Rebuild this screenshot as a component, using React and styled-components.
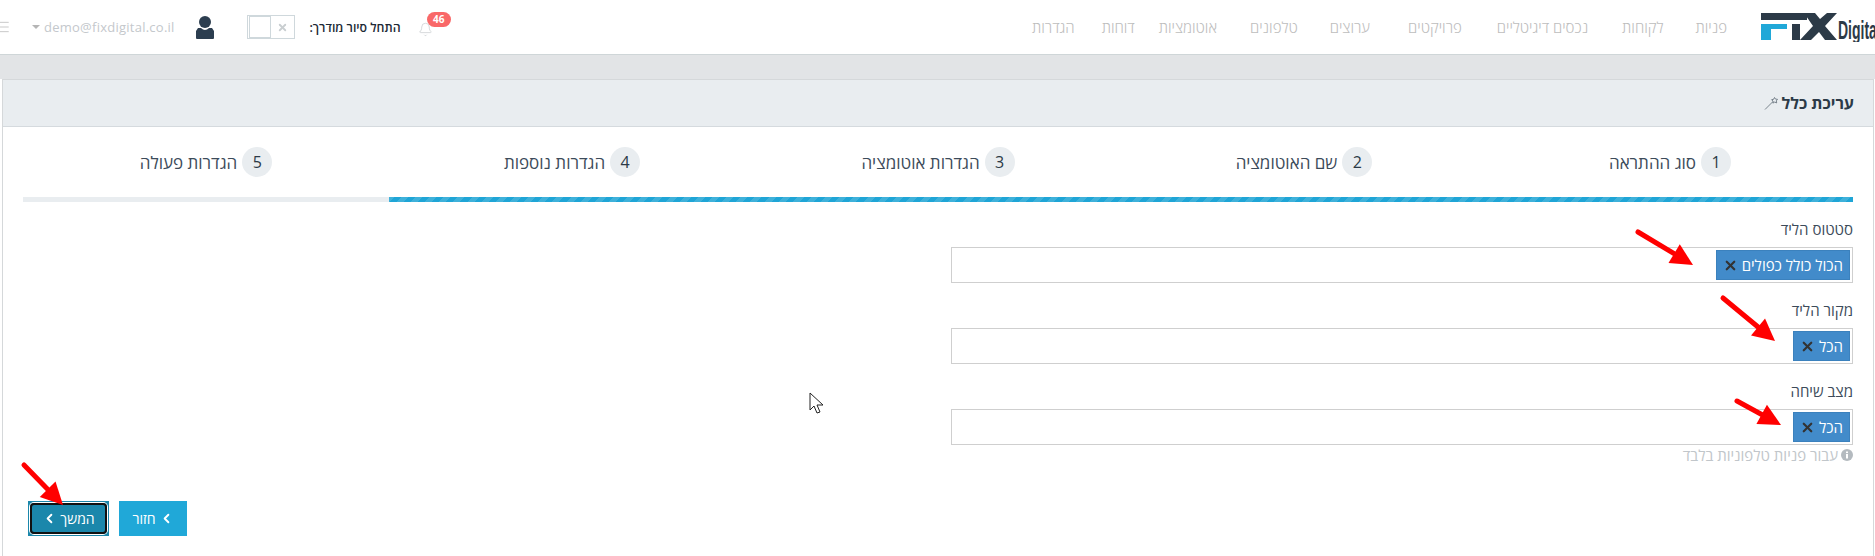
import React from "react";
import styled, { createGlobalStyle } from "styled-components";
import { ChevronLeft, Bell, Menu, X } from "lucide-react";

const GlobalStyle = createGlobalStyle`
  html, body {
    margin: 0;
    padding: 0;
    background: #fff;
    overflow: hidden;
  }
  body {
    font-family: "Open Sans", "Liberation Sans", "DejaVu Sans", sans-serif;
    color: #3c4b5a;
  }
`;

const Page = styled.div`
  position: relative;
  width: 1875px;
  height: 556px;
  overflow: hidden;
  background: #fff;
`;

// Top bar
const Header = styled.header`
  height: 55px;
  box-sizing: border-box;
  display: flex;
  align-items: center;
  justify-content: space-between;
  background: #fff;
  border-bottom: 1px solid #cfd6d8;
`;

const HeaderRight = styled.div`
  display: flex;
  align-items: center;
`;

const LogoBox = styled.div`
  width: 114px;
  height: 30px;
  overflow: hidden;
  display: flex;
  align-items: center;
  direction: ltr;
`;

const LogoMark = styled.svg`
  flex-shrink: 0;
  display: block;
`;

const LogoWord = styled.span`
  flex-shrink: 0;
  font-family: "Liberation Sans", sans-serif;
  font-weight: 700;
  font-size: 25px;
  line-height: 24px;
  color: #2c3a47;
  transform: scaleX(0.56);
  transform-origin: left center;
  margin-left: 1px;
  margin-top: 6px;
`;

const Nav = styled.nav`
  display: flex;
  align-items: center;
  margin-right: 34px;
`;

const NavItem = styled.a`
  font-size: 15px;
  font-weight: 300;
  color: #bdbdbd;
  margin-left: ${(p) => p.$gap}px;
  white-space: nowrap;
`;

const HeaderLeft = styled.div`
  display: flex;
  align-items: center;
  direction: ltr;
`;

const Burger = styled.div`
  display: flex;
  margin-left: -5px;
  color: #c9c9c9;
`;

const Caret = styled.span`
  width: 0;
  height: 0;
  margin-left: 21px;
  border-left: 4px solid transparent;
  border-right: 4px solid transparent;
  border-top: 4px solid #b5b5b5;
`;

const Email = styled.span`
  margin-left: 4px;
  font-size: 13px;
  letter-spacing: 0.25px;
  color: #c4c8cc;
`;

const UserIcon = styled.svg`
  margin-left: 20px;
  display: block;
`;

const Toggle = styled.div`
  margin-left: 32px;
  width: 48px;
  height: 24px;
  box-sizing: border-box;
  border: 1px solid #cfd8dc;
  display: flex;
  align-items: center;
  padding: 1px;
`;

const ToggleKnob = styled.div`
  width: 20px;
  height: 20px;
  border: 1px solid #cfd8dc;
`;

const ToggleMark = styled.div`
  display: flex;
  margin-left: 6px;
  color: #c9ced1;
`;

const TourLabel = styled.span`
  margin-left: 16px;
  width: 90px;
  direction: rtl;
  font-size: 12.3px;
  font-weight: 600;
  color: #1d2a36;
  white-space: nowrap;
`;

const BellWrap = styled.div`
  position: relative;
  margin-left: 17px;
  margin-top: 5px;
  display: flex;
  color: #c9cdd0;
`;

const Badge = styled.span`
  position: absolute;
  left: 9px;
  top: -10px;
  width: 24px;
  height: 15px;
  border-radius: 8px;
  background: #f96868;
  color: #fff;
  font-size: 10px;
  font-weight: 700;
  line-height: 15px;
  text-align: center;
`;

// Page body
const Band = styled.div`
  height: 24px;
  background: #e2e4e6;
`;

const Panel = styled.section`
  margin: 0 1px 0 2px;
  height: 477px;
  box-sizing: border-box;
  border: 1px solid #d5d8da;
  border-bottom: none;
  background: #fff;
`;

const PanelHeader = styled.div`
  height: 47px;
  box-sizing: border-box;
  display: flex;
  align-items: center;
  gap: 3px;
  padding: 0 19px;
  background: #e9edf0;
  border-bottom: 1px solid #d5dade;
`;

const PanelTitle = styled.h3`
  margin: 0;
  font-size: 16px;
  font-weight: 700;
  color: #2c3a47;
`;

const PanelBody = styled.div`
  padding: 20px 20px 0;
`;

const Steps = styled.div`
  display: grid;
  grid-template-columns: repeat(5, 1fr);
`;

const Step = styled.div`
  display: flex;
  justify-content: center;
  align-items: center;
  gap: 5px;
  height: 30px;
`;

const StepNumber = styled.span`
  width: 30px;
  height: 30px;
  border-radius: 50%;
  background: #e9edf0;
  color: #2c3a47;
  font-size: 16px;
  line-height: 30px;
  text-align: center;
`;

const StepLabel = styled.span`
  font-size: 17px;
  color: #3c4b5a;
`;

const Progress = styled.div`
  margin-top: 20px;
  height: 5px;
  background: #e9edf0;
`;

const ProgressFill = styled.div`
  height: 100%;
  background: repeating-linear-gradient(
    -45deg,
    #1fa5d6 0 5px,
    #3fb1da 5px 10px
  );
`;

const Fields = styled.div`
  margin-top: 19px;
  width: 902px;
  display: flex;
  flex-direction: column;
  gap: 19px;
`;

const Field = styled.div`
  display: flex;
  flex-direction: column;
  gap: 7px;
`;

const FieldLabel = styled.label`
  font-size: 15px;
  line-height: 19px;
  margin-top: -1px;
  margin-bottom: 1px;
  color: #3c4b5a;
`;

const SelectBox = styled.div`
  height: 36px;
  box-sizing: border-box;
  border: 1px solid #cfcfcf;
  padding: 2px;
  display: flex;
  align-items: stretch;
`;

const Chip = styled.span`
  display: flex;
  align-items: center;
  gap: 4px;
  padding: 0 6px;
  background: #428bca;
  color: #fff;
  font-size: 15px;
  border: 1px solid #3b81bd;
  white-space: nowrap;
`;

const ChipClose = styled.span`
  display: flex;
  color: #333;
`;

const Hint = styled.div`
  margin-top: -18px;
  display: flex;
  align-items: center;
  gap: 3px;
  font-size: 15px;
  line-height: 18px;
  color: #c1c6ca;
`;

const InfoIcon = styled.svg`
  display: block;
`;

const Buttons = styled.div`
  margin-top: 37px;
  margin-left: 5px;
  display: flex;
  flex-direction: row-reverse;
  justify-content: flex-start;
  gap: 10px;
`;

const ActionButton = styled.button`
  position: relative;
  height: 35px;
  width: ${(p) => p.$width}px;
  display: flex;
  align-items: center;
  justify-content: center;
  gap: 3px;
  border: none;
  padding: 0;
  font-family: inherit;
  font-size: 14px;
  font-weight: 500;
  color: #fff;
  background: ${(p) => (p.$focused ? "#1b87ab" : "#20a8d8")};

  ${(p) =>
    p.$focused &&
    `
    &::after {
      content: "";
      position: absolute;
      inset: 2px;
      border: 2px solid #111;
      border-radius: 4px;
      box-shadow: 0 0 0 1px #fff;
    }
  `}
`;

const Overlay = styled.svg`
  position: absolute;
  left: 0;
  top: 0;
  pointer-events: none;
`;

const navItems = [
  ["פניות", 32],
  ["לקוחות", 34],
  ["נכסים דיגיטליים", 35],
  ["פרויקטים", 38],
  ["ערוצים", 32],
  ["טלפונים", 33],
  ["אוטומציות", 24],
  ["דוחות", 27],
  ["הגדרות", 0],
];

const steps = [
  "סוג ההתראה",
  "שם האוטומציה",
  "הגדרות אוטומציה",
  "הגדרות נוספות",
  "הגדרות פעולה",
];

const fields = [
  { label: "סטטוס הליד", chip: "הכול כולל כפולים" },
  { label: "מקור הליד", chip: "הכל" },
  { label: "מצב שיחה", chip: "הכל" },
];

const arrows = [
  [1638, 232, 1693, 265],
  [1723, 298, 1775, 341],
  [1737, 401, 1781, 425],
  [24, 465, 63, 505],
];

const Arrow = ({ from }) => {
  const [x1, y1, x2, y2] = from;
  const len = Math.hypot(x2 - x1, y2 - y1);
  const ux = (x2 - x1) / len;
  const uy = (y2 - y1) / len;
  const bx = x2 - ux * 22;
  const by = y2 - uy * 22;
  const head = `${x2},${y2} ${bx - uy * 11},${by + ux * 11} ${bx + uy * 11},${by - ux * 11}`;
  return (
    <g>
      <line x1={x1} y1={y1} x2={bx} y2={by} stroke="#f00" strokeWidth="5" strokeLinecap="round" />
      <polygon points={head} fill="#f00" />
    </g>
  );
};

const App = () => (
  <Page dir="rtl">
    <GlobalStyle />
    <Header>
      <HeaderRight>
        <LogoBox>
          <LogoMark width="76" height="28" viewBox="0 0 76 28">
            <rect x="0" y="0" width="46" height="7" fill="#2c3a47" />
            <rect x="0" y="11" width="10" height="16" fill="#20a8d8" />
            <rect x="10" y="11" width="16" height="5" fill="#20a8d8" />
            <rect x="31" y="11" width="8" height="16" fill="#2c3a47" />
            <polygon points="43,0 54,0 59,6 66,0 76,0 64,13 76,27 64,27 58,19 50,27 39,27 52,13" fill="#2c3a47" />
          </LogoMark>
          <LogoWord>Digital</LogoWord>
        </LogoBox>
        <Nav>
          {navItems.map(([name, gap]) => (
            <NavItem key={name} $gap={gap}>{name}</NavItem>
          ))}
        </Nav>
      </HeaderRight>
      <HeaderLeft>
        <Burger><Menu size={16} strokeWidth={1.5} /></Burger>
        <Caret />
        <Email>demo@fixdigital.co.il</Email>
        <UserIcon width="20" height="24" viewBox="0 0 20 24">
          <circle cx="10" cy="7" r="6" fill="#2c3e50" />
          <path d="M3 13 h3 q4 4 8 0 h3 l2 3 v7 q0 1-1 1 H2 q-1 0-1-1 v-7 z" fill="#2c3e50" />
        </UserIcon>
        <Toggle>
          <ToggleKnob />
          <ToggleMark><X size={11} strokeWidth={4} /></ToggleMark>
        </Toggle>
        <TourLabel>התחל סיור מודרך:</TourLabel>
        <BellWrap>
          <Bell size={15} strokeWidth={1.2} />
          <Badge>46</Badge>
        </BellWrap>
      </HeaderLeft>
    </Header>
    <Band />
    <Panel>
      <PanelHeader>
        <PanelTitle>עריכת כלל</PanelTitle>
        <svg width="15" height="13" viewBox="0 0 15 13">
          <line x1="1" y1="12.5" x2="9" y2="4.5" stroke="#7b858d" strokeWidth="1" />
          <path d="M10.5 0.5 l1 1.6 l2 .2 l-1.2 1.6 l.4 2 l-2-.8 l-1.8 1 l.1-2 l-1.4-1.4 l2-.4 z" fill="none" stroke="#6b7680" strokeWidth="0.9" />
        </svg>
      </PanelHeader>
      <PanelBody>
        <Steps>
          {steps.map((name, i) => (
            <Step key={name}>
              <StepNumber>{i + 1}</StepNumber>
              <StepLabel>{name}</StepLabel>
            </Step>
          ))}
        </Steps>
        <Progress>
          <ProgressFill style={{ width: `${(4 / 5) * 100}%` }} />
        </Progress>
        <Fields>
          {fields.map((f) => (
            <Field key={f.label}>
              <FieldLabel>{f.label}</FieldLabel>
              <SelectBox>
                <Chip>
                  {f.chip}
                  <ChipClose><X size={15} strokeWidth={3.5} /></ChipClose>
                </Chip>
              </SelectBox>
            </Field>
          ))}
          <Hint>
            <InfoIcon width="12" height="12" viewBox="0 0 12 12">
              <circle cx="6" cy="6" r="6" fill="#b4babf" />
              <rect x="5" y="5" width="2" height="4.5" fill="#fff" />
              <rect x="5" y="2.5" width="2" height="1.6" fill="#fff" />
            </InfoIcon>
            עבור פניות טלפוניות בלבד
          </Hint>
        </Fields>
        <Buttons>
          <ActionButton $width={81} $focused>
            המשך
            <ChevronLeft size={15} strokeWidth={3} />
          </ActionButton>
          <ActionButton $width={68}>
            <ChevronLeft size={15} strokeWidth={3} />
            חזור
          </ActionButton>
        </Buttons>
      </PanelBody>
    </Panel>
    <Overlay width="1875" height="556" viewBox="0 0 1875 556">
      {arrows.map((a) => (
        <Arrow key={a[0]} from={a} />
      ))}
      <path d="M810 393 v17 l4-4 l3 7 l3-1 l-3-7 h6 z" fill="#fff" stroke="#222" strokeWidth="1" />
    </Overlay>
  </Page>
);

export default App;
